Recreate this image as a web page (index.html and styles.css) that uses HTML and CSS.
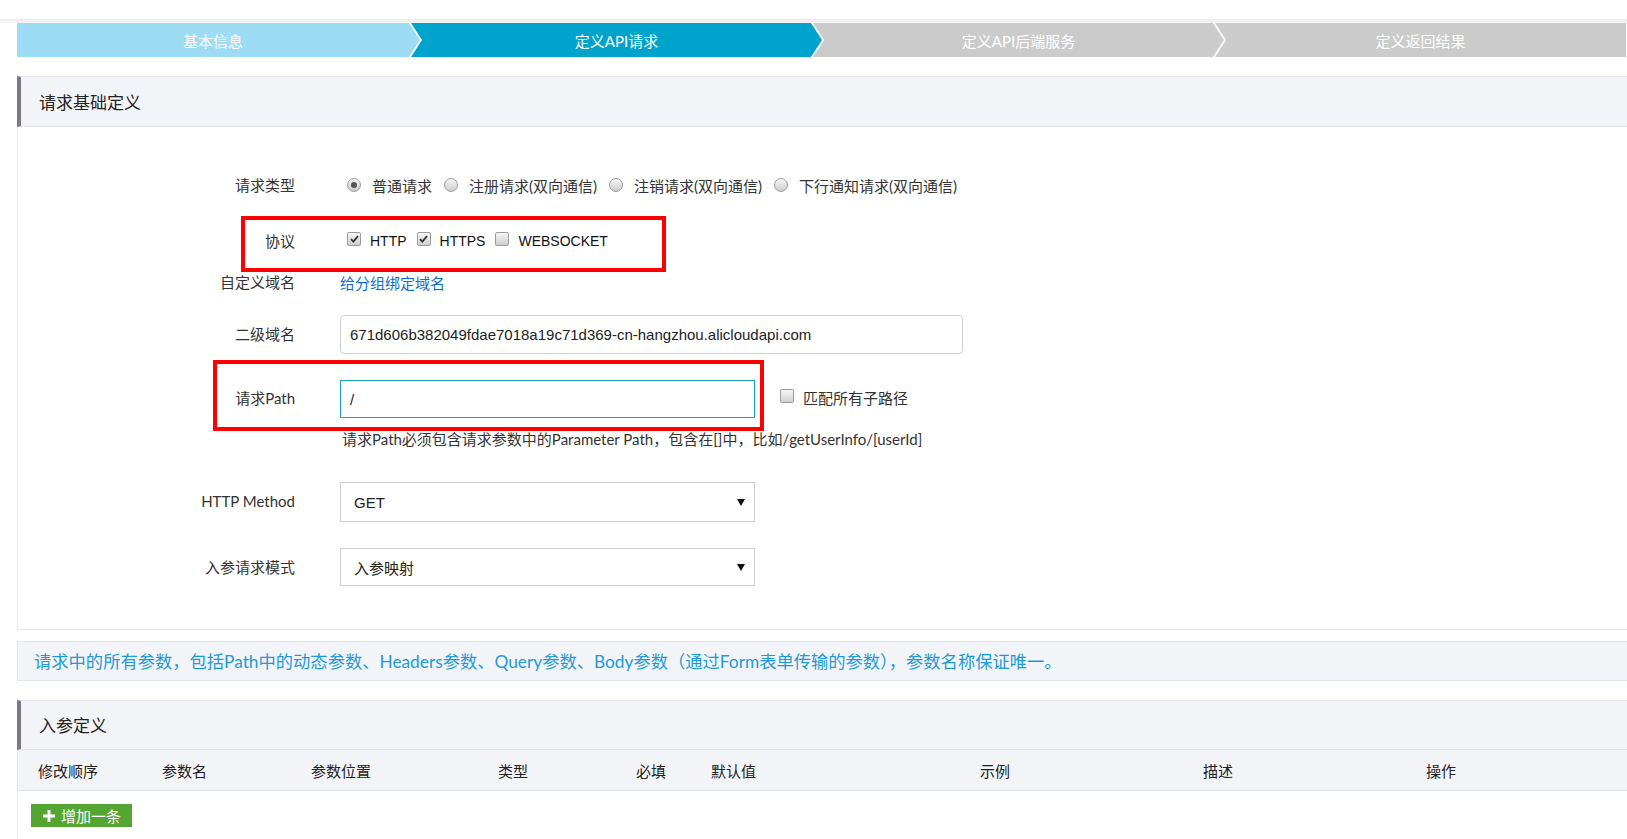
FILE: index.html
```html
<!DOCTYPE html>
<html lang="zh-CN">
<head>
<meta charset="utf-8">
<title>定义API请求</title>
<link rel="stylesheet" href="styles.css">
</head>
<body>
<div class="topbar"></div>
<div class="topshade"></div>
<div class="page">
  <div class="steps">
    <div class="step step-first step-done">基本信息</div>
    <div class="step step-active">定义API请求</div>
    <div class="step">定义API后端服务</div>
    <div class="step step-last">定义返回结果</div>
  </div>

  <div class="section-head">请求基础定义</div>
  <div class="panel form">
    <div class="row r1">
      <div class="label">请求类型</div>
      <div class="ctrl opts">
        <span class="opt"><span class="radio on"></span>普通请求</span>
        <span class="opt"><span class="radio"></span>注册请求(双向通信)</span>
        <span class="opt"><span class="radio"></span>注销请求(双向通信)</span>
        <span class="opt"><span class="radio"></span>下行通知请求(双向通信)</span>
      </div>
    </div>
    <div class="row r2">
      <div class="label">协议</div>
      <div class="ctrl opts">
        <span class="opt latin"><span class="cb on"><svg width="9" height="8" viewBox="0 0 9 8"><path d="M1 4.2 L3.4 6.6 L8 1" fill="none" stroke="#333" stroke-width="1.9"/></svg></span>HTTP</span>
        <span class="opt latin"><span class="cb on"><svg width="9" height="8" viewBox="0 0 9 8"><path d="M1 4.2 L3.4 6.6 L8 1" fill="none" stroke="#333" stroke-width="1.9"/></svg></span>HTTPS</span>
        <span class="opt latin"><span class="cb"></span>WEBSOCKET</span>
      </div>
    </div>
    <div class="row r3">
      <div class="label">自定义域名</div>
      <div class="ctrl"><a class="link">给分组绑定域名</a></div>
    </div>
    <div class="row r4">
      <div class="label">二级域名</div>
      <div class="ctrl"><div class="input wide">671d606b382049fdae7018a19c71d369-cn-hangzhou.alicloudapi.com</div></div>
    </div>
    <div class="row r5">
      <div class="label">请求Path</div>
      <div class="ctrl path-ctrl">
        <div class="input focus">/</div>
        <span class="opt sub"><span class="cb"></span>匹配所有子路径</span>
      </div>
    </div>
    <div class="row help">
      <div class="label"></div>
      <div class="ctrl">请求Path必须包含请求参数中的Parameter Path，包含在[]中，比如/getUserInfo/[userId]</div>
    </div>
    <div class="row r6">
      <div class="label">HTTP Method</div>
      <div class="ctrl"><div class="select latin-val"><span>GET</span><svg width="8" height="7" viewBox="0 0 8 7"><path d="M0 0 H8 L4 7 Z" fill="#111"/></svg></div></div>
    </div>
    <div class="row r7">
      <div class="label">入参请求模式</div>
      <div class="ctrl"><div class="select"><span>入参映射</span><svg width="8" height="7" viewBox="0 0 8 7"><path d="M0 0 H8 L4 7 Z" fill="#111"/></svg></div></div>
    </div>
  </div>

  <div class="notice">请求中的所有参数，包括Path中的动态参数、Headers参数、Query参数、Body参数（通过Form表单传输的参数），参数名称保证唯一。</div>

  <div class="section-head s2">入参定义</div>
  <div class="table-head">
    <span>修改顺序</span><span>参数名</span><span>参数位置</span><span>类型</span><span>必填</span><span>默认值</span><span>示例</span><span>描述</span><span>操作</span>
  </div>
  <div class="table-body">
    <button class="add"><svg width="12" height="12" viewBox="0 0 12 12"><path d="M6 0 V12 M0 6 H12" stroke="#fff" stroke-width="3"/></svg>增加一条</button>
  </div>
</div>
<div class="mark mark1"></div>
<div class="mark mark2"></div>
</body>
</html>
```

FILE: styles.css
```css
* { box-sizing: border-box; }
html, body { margin: 0; padding: 0; }
body {
  width: 1627px;
  height: 839px;
  overflow: hidden;
  position: relative;
  background: #fff;
  font-family: Lato, "Noto Sans CJK SC", sans-serif;
  font-size: 15px;
  color: #333;
}
.topbar { height: 19px; background: #fff; }
.topshade { height: 4px; background: linear-gradient(#ebebeb, #f6f6f6); }
.page { padding-left: 17px; width: 1700px; }

.steps { display: flex; height: 34px; }
.step {
  flex: 0 0 411px;
  margin-left: -9px;
  padding: 0 11px;
  display: flex;
  align-items: center;
  justify-content: center;
  color: #fff;
  font-size: 15px;
  background: #cbcbcb;
  clip-path: polygon(0 0, calc(100% - 11px) 0, 100% 50%, calc(100% - 11px) 100%, 0 100%, 11px 50%);
}
.step-first {
  flex-basis: 403px;
  margin-left: 0;
  padding: 0 11px 0 0;
  clip-path: polygon(0 0, calc(100% - 11px) 0, 100% 50%, calc(100% - 11px) 100%, 0 100%);
}
.step-last { clip-path: polygon(0 0, 100% 0, 100% 100%, 0 100%, 11px 50%); }
.step-done { background: #9ddcf4; }
.step-active { background: #00a3cb; }

.section-head {
  margin-top: 19px;
  height: 51px;
  display: flex;
  align-items: center;
  padding-left: 18px;
  padding-bottom: 1px;
  background: #f3f4f8;
  border-top: 1px solid #e1e4ea;
  border-bottom: 1px solid #e1e4ea;
  border-left: 4px solid #7a7889;
  font-size: 17px;
  color: #222;
}
.section-head.s2 { margin-top: 19px; height: 50px; }

.panel {
  border: 1px solid #e5e6ea;
  border-top: none;
}
.form { padding-top: 48px; padding-bottom: 43px; }
.row { display: flex; align-items: center; }
.label {
  flex: 0 0 277px;
  text-align: right;
  color: #333;
  padding-bottom: 2px;
}
.ctrl { margin-left: 45px; display: flex; align-items: center; }
.r1 { height: 20px; }
.r2 { height: 20px; margin-top: 36px; }
.r3 { height: 20px; margin-top: 21px; }
.r4 { height: 39px; margin-top: 23px; }
.r5 { height: 38px; margin-top: 26px; align-items: flex-start; }
.r5 .label { line-height: 36px; }
.help { height: 20px; margin-top: 10px; }
.help .ctrl { margin-left: 47px; }
.r6 { height: 40px; margin-top: 34px; }
.r7 { height: 38px; margin-top: 26px; }

.opts { padding-left: 7px; }
.opt { display: inline-flex; align-items: center; margin-right: 12px; white-space: nowrap; }
.opt.latin { font-family: "Liberation Sans", Arial, sans-serif; font-size: 14px; color: #111; margin-right: 10px; }
.radio {
  width: 14px; height: 14px;
  border-radius: 50%;
  border: 1px solid #9c9c9c;
  background: linear-gradient(#f6f6f6, #cdcdcd);
  margin-right: 11px;
  display: inline-flex; align-items: center; justify-content: center;
}
.radio.on::after {
  content: "";
  width: 6px; height: 6px; border-radius: 50%;
  background: #555;
}
.cb {
  width: 14px; height: 14px;
  border-radius: 2px;
  border: 1px solid #9c9c9c;
  background: linear-gradient(#f6f6f6, #cfcfcf);
  margin-right: 9px;
  margin-top: -5px;
  display: inline-flex; align-items: center; justify-content: center;
}
.link { color: #0b6fd0; text-decoration: none; }

.input {
  height: 100%;
  border: 1px solid #cfcfcf;
  display: flex; align-items: center;
  padding-left: 9px;
  font-family: "Liberation Sans", Arial, sans-serif;
  font-size: 15px;
  color: #222;
  background: #fff;
}
.r4 .ctrl, .r5 .ctrl, .r6 .ctrl, .r7 .ctrl { height: 100%; }
.input.wide { width: 623px; border-radius: 4px; }
.input.focus { width: 415px; height: 38px; border-color: #1a9fca; }
.path-ctrl { align-items: flex-start; }
.opt.sub { margin-left: 25px; margin-top: 7px; height: 20px; }
.opt.sub .cb { margin-top: -3px; }

.select {
  width: 415px;
  height: 100%;
  border: 1px solid #cfcfcf;
  display: flex; align-items: center; justify-content: space-between;
  padding: 0 9px 0 13px;
  background: #fff;
  color: #222;
}
.select.latin-val span { font-family: "Liberation Sans", Arial, sans-serif; font-size: 15px; }

.notice {
  margin-top: 11px;
  height: 40px;
  display: flex; align-items: center;
  padding-left: 16px;
  padding-bottom: 1px;
  background: #f3f4f8;
  border: 1px solid #e1e4ea;
  color: #1c9bd6;
  font-size: 17.3px;
}

.table-head {
  height: 41px;
  display: grid;
  grid-template-columns: 124px 149px 187px 138px 75px 269px 223px 223px 1fr;
  align-items: center;
  padding-left: 20px;
  background: #f3f4f8;
  border-left: 1px solid #e1e4ea;
  border-bottom: 1px solid #e1e4ea;
  color: #222;
}
.table-body {
  height: 60px;
  border-left: 1px solid #e5e6ea;
  padding: 13px 0 0 13px;
}
.add {
  width: 101px; height: 23px;
  border: none;
  background: #55a532;
  color: #fff;
  font-family: Lato, "Noto Sans CJK SC", sans-serif;
  font-size: 15px;
  display: flex; align-items: center;
  padding: 0 0 0 12px;
  gap: 6px;
}

.mark { position: absolute; border: 4px solid #ff0000; }
.mark1 { left: 241px; top: 216px; width: 425px; height: 56px; }
.mark2 { left: 213px; top: 360px; width: 551px; height: 71px; }
```
